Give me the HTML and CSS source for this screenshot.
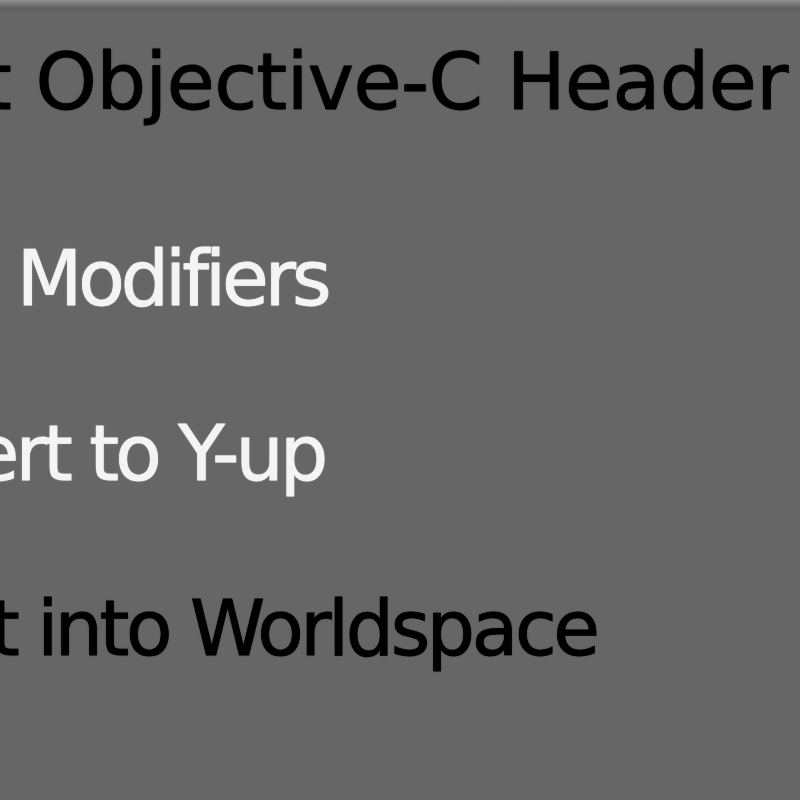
FILE: index.html
```html
<!DOCTYPE html>
<html>
<head>
<meta charset="utf-8">
<link rel="stylesheet" href="styles.css">
</head>
<body>
<div class="edge"></div>
<div class="panel">
  <div class="row title">Export Objective-C Header</div>
  <div class="row opt opt-mod">Apply Modifiers</div>
  <div class="row opt opt-yup">Convert to Y-up</div>
  <div class="row label">Export into Worldspace</div>
</div>
</body>
</html>
```
FILE: styles.css
```css
html, body {
  margin: 0;
  padding: 0;
  width: 800px;
  height: 800px;
  overflow: hidden;
  background: #666666;
}
.edge {
  height: 12px;
  background: linear-gradient(to bottom, #8f8f8f 0px, #7a7a7a 4px, #5c5c5c 9px, #666666 12px);
}
.panel {
  display: flex;
  flex-direction: column;
  gap: 89px;
  padding-top: 27px;
  font-family: "DejaVu Sans", sans-serif;
  font-size: 76px;
  line-height: 86px;
  white-space: nowrap;
  -webkit-text-stroke: 0.8px currentColor;
}
.row {
  height: 86px;
  text-shadow: 0 0 1.5px currentColor;
}
.title {
  color: #000000;
  font-size: 78px;
  letter-spacing: -0.5px;
  text-indent: -241px;
  margin-bottom: 22px;
}
.opt {
  color: #f4f4f4;
}
.opt-mod {
  letter-spacing: -4px;
  text-indent: -198px;
}
.opt-yup {
  letter-spacing: -3.8px;
  text-indent: -205px;
}
.label {
  color: #000000;
  letter-spacing: -3.4px;
  text-indent: -212px;
}
```
